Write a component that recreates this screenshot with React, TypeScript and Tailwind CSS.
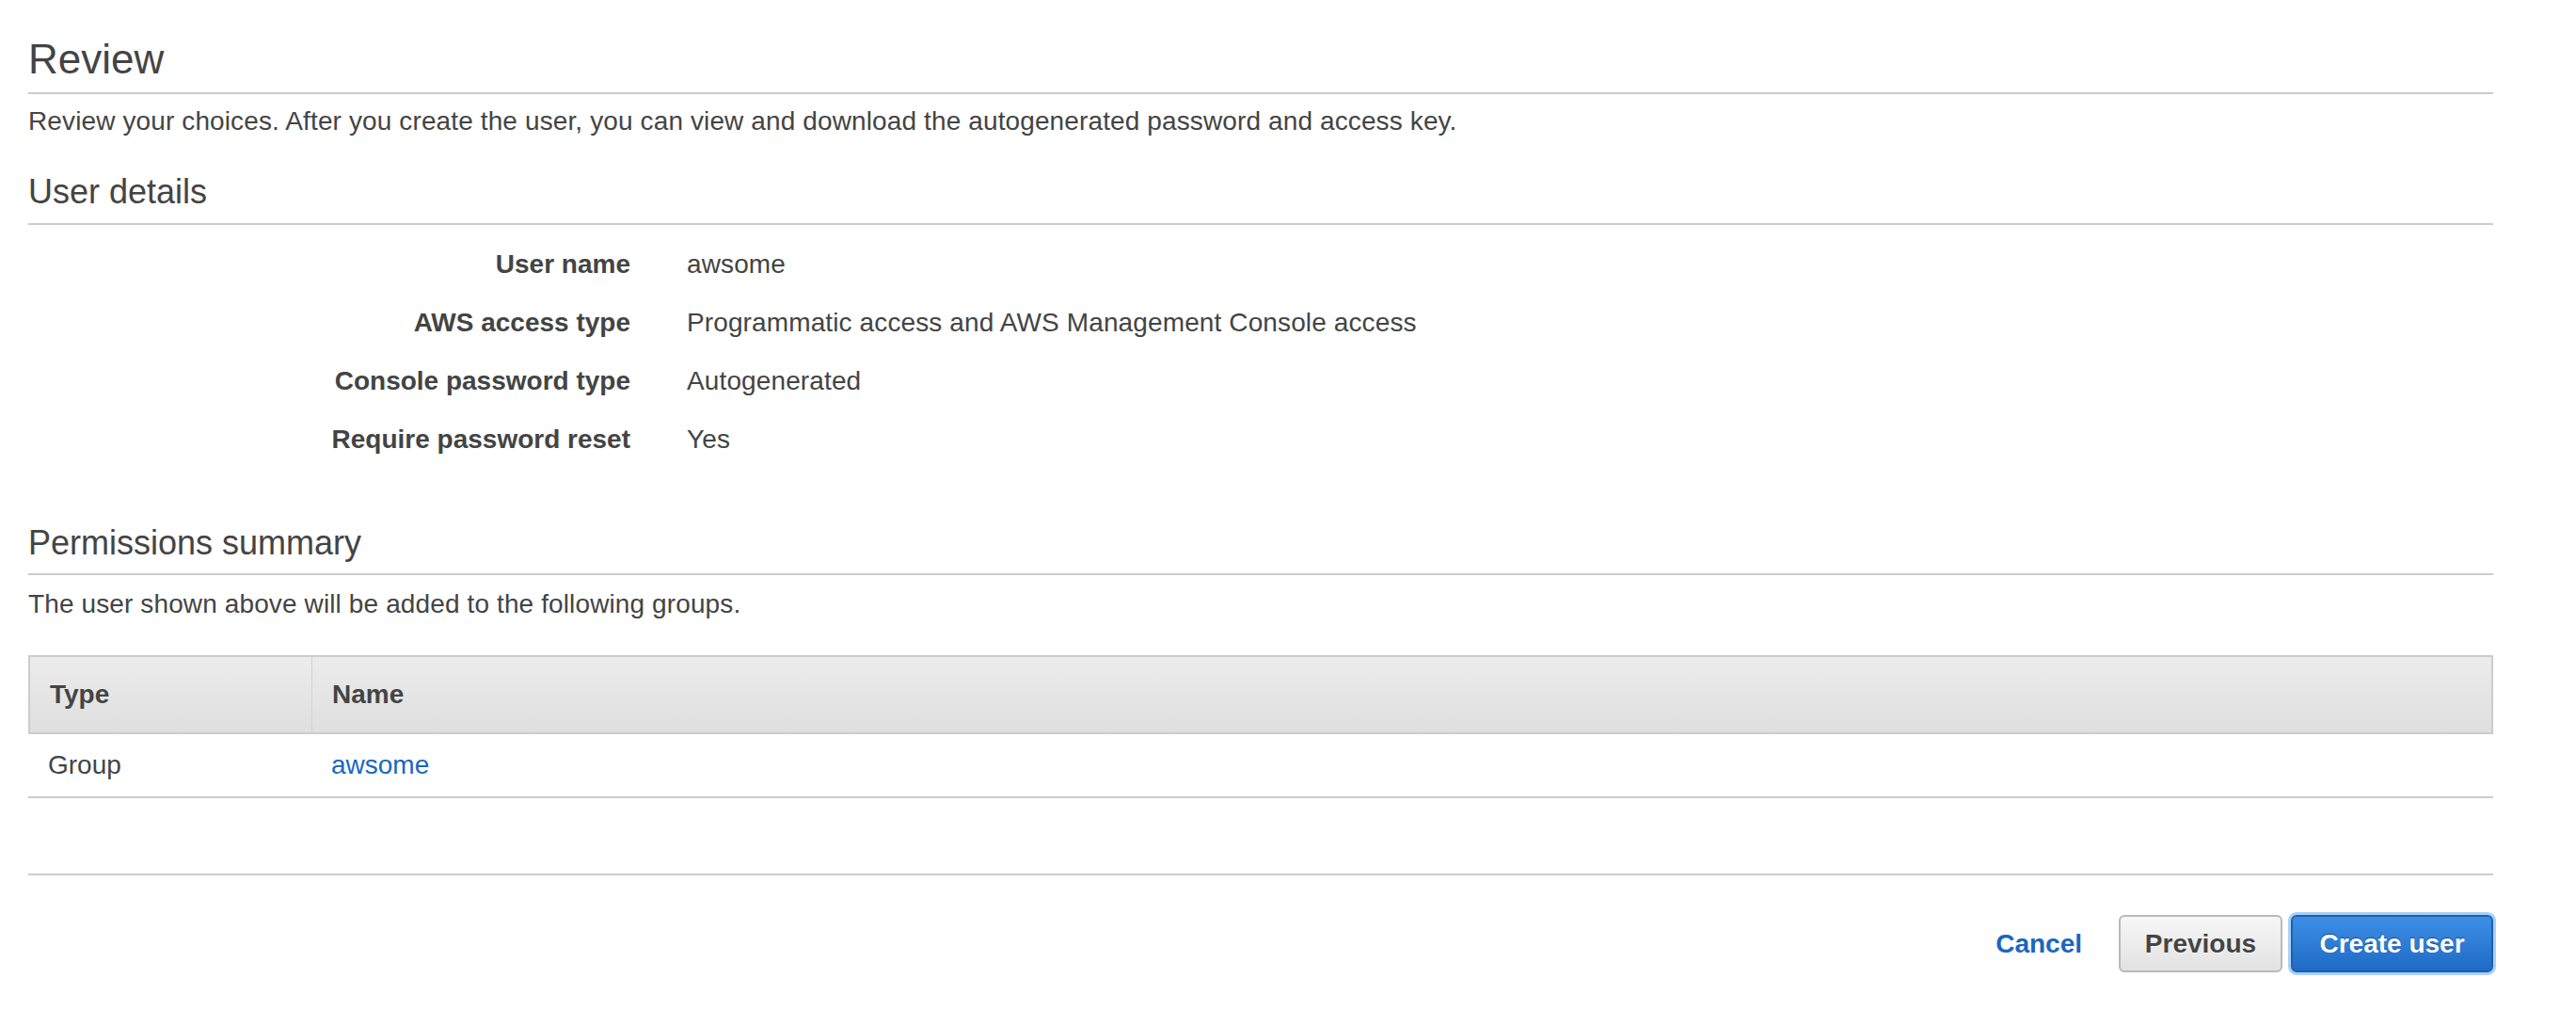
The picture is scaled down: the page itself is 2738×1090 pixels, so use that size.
const rows = [
  { label: 'User name', value: 'awsome' },
  { label: 'AWS access type', value: 'Programmatic access and AWS Management Console access' },
  { label: 'Console password type', value: 'Autogenerated' },
  { label: 'Require password reset', value: 'Yes' },
]

export default function App() {
  return (
    <div
      className="min-h-screen bg-white text-[#444444]"
      style={{ fontFamily: '"Liberation Sans", Arial, Helvetica, sans-serif' }}
    >
      <div className="ml-[30px] w-[2620px] pt-[37px]">
        {/* Review */}
        <h2 className="text-[44px] leading-[52px] font-normal pb-[9px] border-b-2 border-[#cccccc]">
          Review
        </h2>
        <p className="mt-[13px] text-[28px] leading-[32px] tracking-[0.12px]">
          Review your choices. After you create the user, you can view and download the autogenerated password and access key.
        </p>

        {/* User details */}
        <h3 className="mt-[38px] text-[36px] leading-[42px] font-normal pb-[12px] border-b-2 border-[#cccccc]">
          User details
        </h3>
        <div className="mt-[26px] flex flex-col gap-[30px]">
          {rows.map((r) => (
            <div key={r.label} className="flex text-[28px] leading-[32px]">
              <div className="w-[640px] text-right font-bold">{r.label}</div>
              <div className="ml-[60px] tracking-[0.12px]">{r.value}</div>
            </div>
          ))}
        </div>

        {/* Permissions summary */}
        <h3 className="mt-[73px] text-[36px] leading-[42px] font-normal pb-[11px] border-b-2 border-[#cccccc]">
          Permissions summary
        </h3>
        <p className="mt-[15px] text-[28px] leading-[32px] tracking-[0.12px]">
          The user shown above will be added to the following groups.
        </p>

        <div className="mt-[38px] text-[28px]">
          <div className="flex h-[84px] items-center border-2 border-[#cccccc] bg-gradient-to-b from-[#ececec] to-[#dfdfdf] font-bold">
            <div className="w-[300px] h-full flex items-center pl-[21px] border-r border-[#d3d3d3]">Type</div>
            <div className="pl-[21px]">Name</div>
          </div>
          <div className="flex h-[68px] items-center border-b-2 border-[#cccccc]">
            <div className="w-[302px] pl-[21px]">Group</div>
            <a href="#" className="pl-[20px] text-[#1a66c2]">awsome</a>
          </div>
        </div>

        {/* Footer */}
        <div className="mt-[80px] border-t-2 border-[#cccccc] pt-[42px] flex items-center justify-end">
          <a href="#" className="text-[28px] font-bold text-[#1a66c2] mr-[39px]">Cancel</a>
          <button className="h-[61px] w-[174px] rounded-[6px] border-2 border-[#b9b9b9] bg-gradient-to-b from-[#f7f7f7] to-[#e2e2e2] text-[28px] font-bold text-[#444444] [text-shadow:0_1px_0_#ffffff]">
            Previous
          </button>
          <button className="ml-[9px] h-[61px] w-[215px] rounded-[6px] border-2 border-[#1f5fae] bg-gradient-to-b from-[#3d8fe6] to-[#1f6bc6] text-[28px] font-bold text-white shadow-[0_0_0_3px_#a9d1f7] [text-shadow:0_-1px_1px_#1a4f8f]">
            Create user
          </button>
        </div>
      </div>
    </div>
  )
}
